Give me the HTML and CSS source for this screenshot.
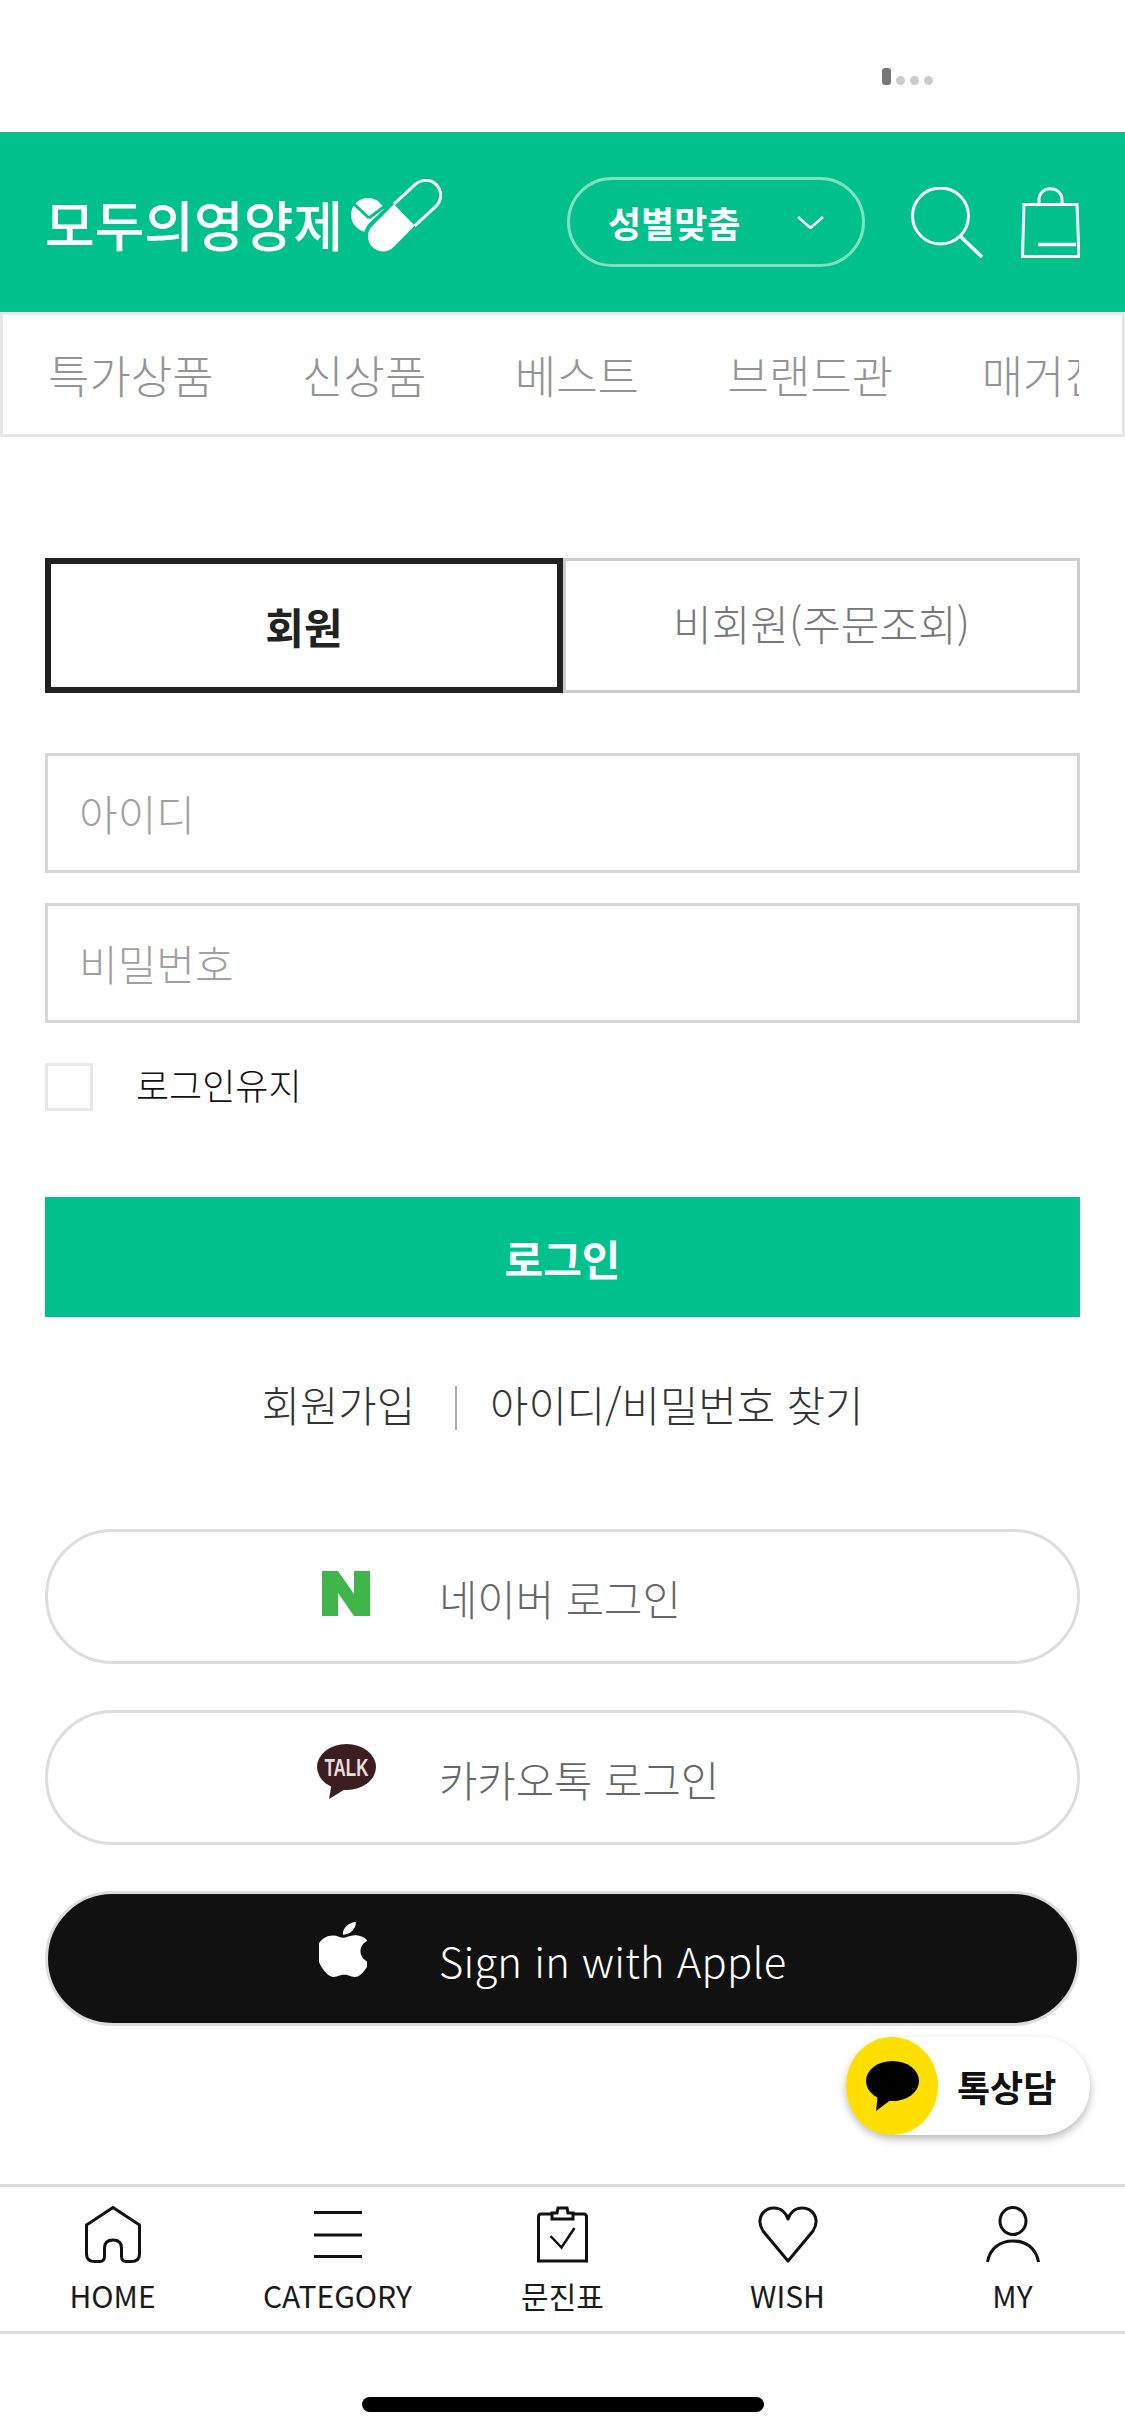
FILE: index.html
```html
<!DOCTYPE html>
<html lang="ko">
<head>
<meta charset="utf-8">
<title>모두의영양제 로그인</title>
<link rel="stylesheet" href="styles.css">
</head>
<body>
<div class="status">
  <div class="signal"><i class="signal-bar"></i><i class="signal-dot"></i><i class="signal-dot"></i><i class="signal-dot"></i></div>
</div>
<header class="header">
  <a class="logo">
    <span class="logo-text">모두의영양제</span>
    <svg class="logo-pill" viewBox="0 0 91 74" width="91" height="74">
      <circle cx="17" cy="36" r="17" fill="#fff"/>
      <path d="M3 25 L18 39 M18 39 L34 27" stroke="#00c08b" stroke-width="3" fill="none"/>
      <path d="M64.6 5.2 A15 15 0 0 1 85.4 26.8 L42.1 68.5 A15 15 0 0 1 21.3 46.9 Z" fill="#00c08b" stroke="#00c08b" stroke-width="8"/>
      <path d="M42.9 25.2 L21.3 46.9 A15 15 0 0 0 42.1 68.5 L63.7 46.8 Z" fill="#fff"/>
      <path d="M42.9 25.2 L64.6 5.2 A15 15 0 0 1 85.4 26.8 L63.7 46.8" fill="none" stroke="#fff" stroke-width="3"/>
    </svg>
  </a>
  <button class="gender">
    <span>성별맞춤</span>
    <svg viewBox="0 0 27 13" width="27" height="13"><path d="M1 1 L13.500 12 L26 1" fill="none" stroke="#fff" stroke-width="2.500"/></svg>
  </button>
  <svg class="search" viewBox="0 0 72 71" width="72" height="71"><circle cx="29.500" cy="29" r="28" fill="none" stroke="#fff" stroke-width="3"/><path d="M49 49 L71 70" stroke="#fff" stroke-width="3.500"/></svg>
  <svg class="bag" viewBox="0 0 59 71" width="59" height="71">
    <path d="M3 17.500 H56 L58 69.500 H1.500 Z" fill="none" stroke="#fff" stroke-width="3"/>
    <path d="M18 17 V13 C18 -2 41 -2 41 13 V17" fill="none" stroke="#fff" stroke-width="3"/>
    <path d="M17 57.500 H55" stroke="#fff" stroke-width="3.500"/>
  </svg>
</header>
<nav class="nav">
  <div class="nav-track">
    <a class="nav-item">특가상품</a>
    <a class="nav-item">신상품</a>
    <a class="nav-item">베스트</a>
    <a class="nav-item">브랜드관</a>
    <a class="nav-item">매거진</a>
  </div>
</nav>
<main class="main">
  <div class="tabs">
    <button class="tab tab-active">회원</button>
    <button class="tab">비회원(주문조회)</button>
  </div>
  <form class="form">
    <input class="field" type="text" placeholder="아이디">
    <input class="field" type="password" placeholder="비밀번호">
    <label class="keep"><input class="check" type="checkbox"><span class="keep-label">로그인유지</span></label>
    <button class="submit" type="button">로그인</button>
  </form>
  <div class="links">
    <a>회원가입</a>
    <i class="links-sep"></i>
    <a>아이디/비밀번호 찾기</a>
  </div>
  <div class="social">
    <a class="social-btn">
      <span class="social-icon icon-naver"><svg viewBox="0 0 48 45" width="48" height="45"><path d="M0 0 H16 L32 23 V0 H48 V45 H32 L16 22 V45 H0 Z" fill="#3fb54a"/></svg></span>
      <span class="social-label">네이버 로그인</span>
    </a>
    <a class="social-btn">
      <span class="social-icon icon-talk"><svg viewBox="0 0 59 55" width="59" height="55">
        <ellipse cx="29.500" cy="23" rx="29.500" ry="23" fill="#3c1d20"/>
        <path d="M15 38 L12 55 L30 44 Z" fill="#3c1d20"/>
        <text class="talk-text" x="29.500" y="32" text-anchor="middle" textLength="44" lengthAdjust="spacingAndGlyphs">TALK</text>
      </svg></span>
      <span class="social-label">카카오톡 로그인</span>
    </a>
    <a class="social-btn social-apple">
      <span class="social-icon icon-apple"><svg viewBox="3 0 18 24" width="48" height="55" preserveAspectRatio="none"><path d="M12.152 6.896c-.948 0-2.415-1.078-3.96-1.04-2.04.027-3.91 1.183-4.961 3.014-2.117 3.675-.546 9.103 1.519 12.09 1.013 1.454 2.208 3.09 3.792 3.039 1.52-.065 2.09-.987 3.935-.987 1.831 0 2.35.987 3.96.948 1.637-.026 2.676-1.48 3.676-2.948 1.156-1.688 1.636-3.325 1.662-3.415-.039-.013-3.182-1.221-3.22-4.857-.026-3.04 2.48-4.494 2.597-4.559-1.429-2.09-3.623-2.324-4.39-2.376-2-.156-3.675 1.09-4.61 1.09zM15.53 3.83c.843-1.012 1.4-2.427 1.245-3.83-1.207.052-2.662.805-3.532 1.818-.78.896-1.454 2.338-1.273 3.714 1.338.104 2.715-.688 3.559-1.701" fill="#fff"/></svg></span>
      <span class="social-label apple-label">Sign in with Apple</span>
    </a>
  </div>
</main>
<div class="talk-badge">
  <span class="talk-circle"><svg viewBox="0 0 53 50" width="53" height="50"><ellipse cx="26.500" cy="20" rx="26.500" ry="20" fill="#000"/><path d="M12 32 L10 50 L26 38 Z" fill="#000"/></svg></span>
  <span class="talk-label">톡상담</span>
</div>
<footer class="tabbar">
  <a class="tabbar-item">
    <svg viewBox="0 0 56 57" width="56" height="57"><path d="M28 1.500 L1.500 19 V48 Q1.500 55.500 10 55.500 H15 Q19.500 55.500 19.500 50 V42 Q19.500 34 28 34 Q36.500 34 36.500 42 V50 Q36.500 55.500 41 55.500 H46 Q54.500 55.500 54.500 48 V19 Z" fill="none" stroke="#111" stroke-width="3" stroke-linejoin="round"/></svg>
    <span>HOME</span>
  </a>
  <a class="tabbar-item">
    <svg viewBox="0 0 48 57" width="48" height="57"><path d="M0 6.500 H48 M0 29 H48 M0 50.500 H48" stroke="#111" stroke-width="3"/></svg>
    <span>CATEGORY</span>
  </a>
  <a class="tabbar-item">
    <svg viewBox="0 0 51 57" width="51" height="57"><path d="M15 8 H4 Q1.500 8 1.500 11 V55 H49.500 V11 Q49.500 8 47 8 H36" fill="none" stroke="#111" stroke-width="3"/><path d="M15 13 V7 H20 L21 2 H30 L31 7 H36 V13 Z" fill="none" stroke="#111" stroke-width="3"/><path d="M13.500 30 L24.500 41.500 L37.500 22" fill="none" stroke="#111" stroke-width="2.500"/></svg>
    <span>문진표</span>
  </a>
  <a class="tabbar-item">
    <svg viewBox="0 0 60 57" width="60" height="57"><path d="M30 55 L5 25 C-3 12 6 2 16 2 C23 2 28 7 30 13 C32 7 37 2 44 2 C54 2 63 12 55 25 Z" fill="none" stroke="#111" stroke-width="3" stroke-linejoin="round"/></svg>
    <span>WISH</span>
  </a>
  <a class="tabbar-item">
    <svg viewBox="0 0 54 57" width="54" height="57"><ellipse cx="27" cy="15" rx="13" ry="13.500" fill="none" stroke="#111" stroke-width="3"/><path d="M1.500 56 C4 42 14 35 27 35 C40 35 50 42 52.500 56" fill="none" stroke="#111" stroke-width="3"/></svg>
    <span>MY</span>
  </a>
</footer>
<div class="home-area"><i class="home-bar"></i></div>
</body>
</html>
```

FILE: styles.css
```css
* { box-sizing: border-box; margin: 0; padding: 0; }
html, body { width: 1125px; height: 2436px; overflow: hidden; }
body {
  position: relative;
  display: flex;
  flex-direction: column;
  background: #fff;
  font-family: "Noto Sans CJK KR", "Noto Sans", sans-serif;
  font-weight: 300;
  color: #222;
}
a { color: inherit; text-decoration: none; }
i { display: block; }
button { font: inherit; background: none; border: 0; }

.status { height: 132px; display: flex; justify-content: flex-end; align-items: flex-end; padding: 0 192px 47px 0; }
.signal { display: flex; align-items: flex-end; gap: 5px; }
.signal-bar { width: 9px; height: 17px; border-radius: 3px; background: #777; }
.signal-dot { width: 9px; height: 9px; border-radius: 50%; background: #ccc; }

.header { height: 180px; background: #00c08b; display: flex; align-items: center; padding: 0 45px; flex: none; }
.logo { display: flex; align-items: flex-end; gap: 8px; margin-bottom: 12px; }
.logo-text { font-size: 54px; line-height: 60px; font-weight: 500; color: #fff; white-space: nowrap; margin-bottom: -1px; }
.logo-pill { flex: none; }
.gender {
  width: 298px; height: 90px; margin-left: auto;
  display: flex; align-items: center; justify-content: space-between;
  padding: 0 38px;
  border: 3px solid rgba(255, 255, 255, .5);
  border-radius: 45px;
  color: #fff; font-size: 36px; font-weight: 700;
}
.search { margin-left: 46px; flex: none; }
.bag { margin-left: 38px; flex: none; }

.nav { height: 125px; flex: none; border: 3px solid #e6e6e6; border-top-color: #e0eeea; display: flex; align-items: center; }
.nav-track { flex: 1; margin-right: 43px; padding-left: 45px; display: flex; gap: 88.5px; overflow: hidden; }
.nav-item { flex: none; font-size: 45px; line-height: 70px; color: #949494; white-space: nowrap; }

.main { flex: 1; padding: 121px 45px 0; }
.tabs { display: grid; grid-template-columns: 518px 517px; height: 135px; }
.tab { border: 3px solid #ccc; font-size: 42px; color: #777; line-height: 66px; padding-bottom: 5px; }
.tab-active { border: 6px solid #222; color: #222; font-weight: 700; padding-bottom: 0; }

.form { display: flex; flex-direction: column; margin-top: 60px; }
.field {
  height: 120px; margin-bottom: 30px; padding: 0 31px 2px;
  border: 3px solid #d6d6d6; border-radius: 0; outline: 0;
  font: inherit; font-size: 42px; color: #222; background: #fff;
}
.field::placeholder { color: #a0a0a0; opacity: 1; }
.keep { display: flex; align-items: center; gap: 43px; height: 48px; margin-top: 10px; font-size: 36px; color: #111; line-height: 54px; }
.keep-label { padding-bottom: 6px; }
.check { appearance: none; width: 48px; height: 48px; border: 3px solid #e8e8e8; background: #fff; }
.submit { height: 120px; margin-top: 86px; background: #00c08b; color: #fff; font-size: 42px; font-weight: 700; }

.links { margin-top: 63px; height: 48px; display: flex; align-items: center; justify-content: center; font-size: 41.7px; line-height: 62px; color: #333; }
.links-sep { width: 2px; height: 44px; margin: 8px 33px 0 40px; background: #aaa; }

.social { margin-top: 100.5px; display: flex; flex-direction: column; gap: 46px; }
.social-btn {
  height: 135px; display: flex; align-items: center;
  padding-left: 268px;
  border: 3px solid #ddd; border-radius: 68px;
  font-size: 41.7px; line-height: 62px; color: #666;
}
.social-apple { background: #111; color: #fff; }
.social-icon { width: 60px; margin-right: 63px; display: flex; justify-content: center; flex: none; }
.social-label { padding-top: 4px; }
.icon-naver { margin-bottom: 6px; }
.icon-talk { margin-bottom: 12px; }
.icon-talk svg { overflow: visible; }
.icon-apple { margin-bottom: 18px; padding-right: 6px; }
.apple-label { letter-spacing: .25px; padding-top: 3px; }
.talk-text { font-family: "Liberation Sans", sans-serif; font-size: 23px; font-weight: 700; fill: #e8dcdc; }

.talk-badge {
  position: absolute; left: 846px; top: 2037px;
  width: 244px; height: 98px;
  display: flex; align-items: center; gap: 19px;
  background: #fff; border-radius: 49px;
  box-shadow: 0 4px 9px rgba(0, 0, 0, .28);
}
.talk-circle { width: 92px; height: 98px; border-radius: 50%; background: #ffdf00; display: flex; align-items: center; justify-content: center; flex: none; }
.talk-label { font-size: 36px; font-weight: 700; color: #111; line-height: 54px; }

.tabbar { height: 150px; flex: none; border-top: 3px solid #ddd; border-bottom: 3px solid #ddd; display: grid; grid-template-columns: repeat(5, 225px); }
.tabbar-item { display: flex; flex-direction: column; align-items: center; padding-top: 19px; font-size: 30px; line-height: 44px; color: #1a1a1a; }
.tabbar-item span { margin-top: 10px; font-weight: 400; }

.home-area { height: 102px; flex: none; display: flex; justify-content: center; padding-top: 63px; }
.home-bar { width: 402px; height: 15px; border-radius: 8px; background: #000; }
```
